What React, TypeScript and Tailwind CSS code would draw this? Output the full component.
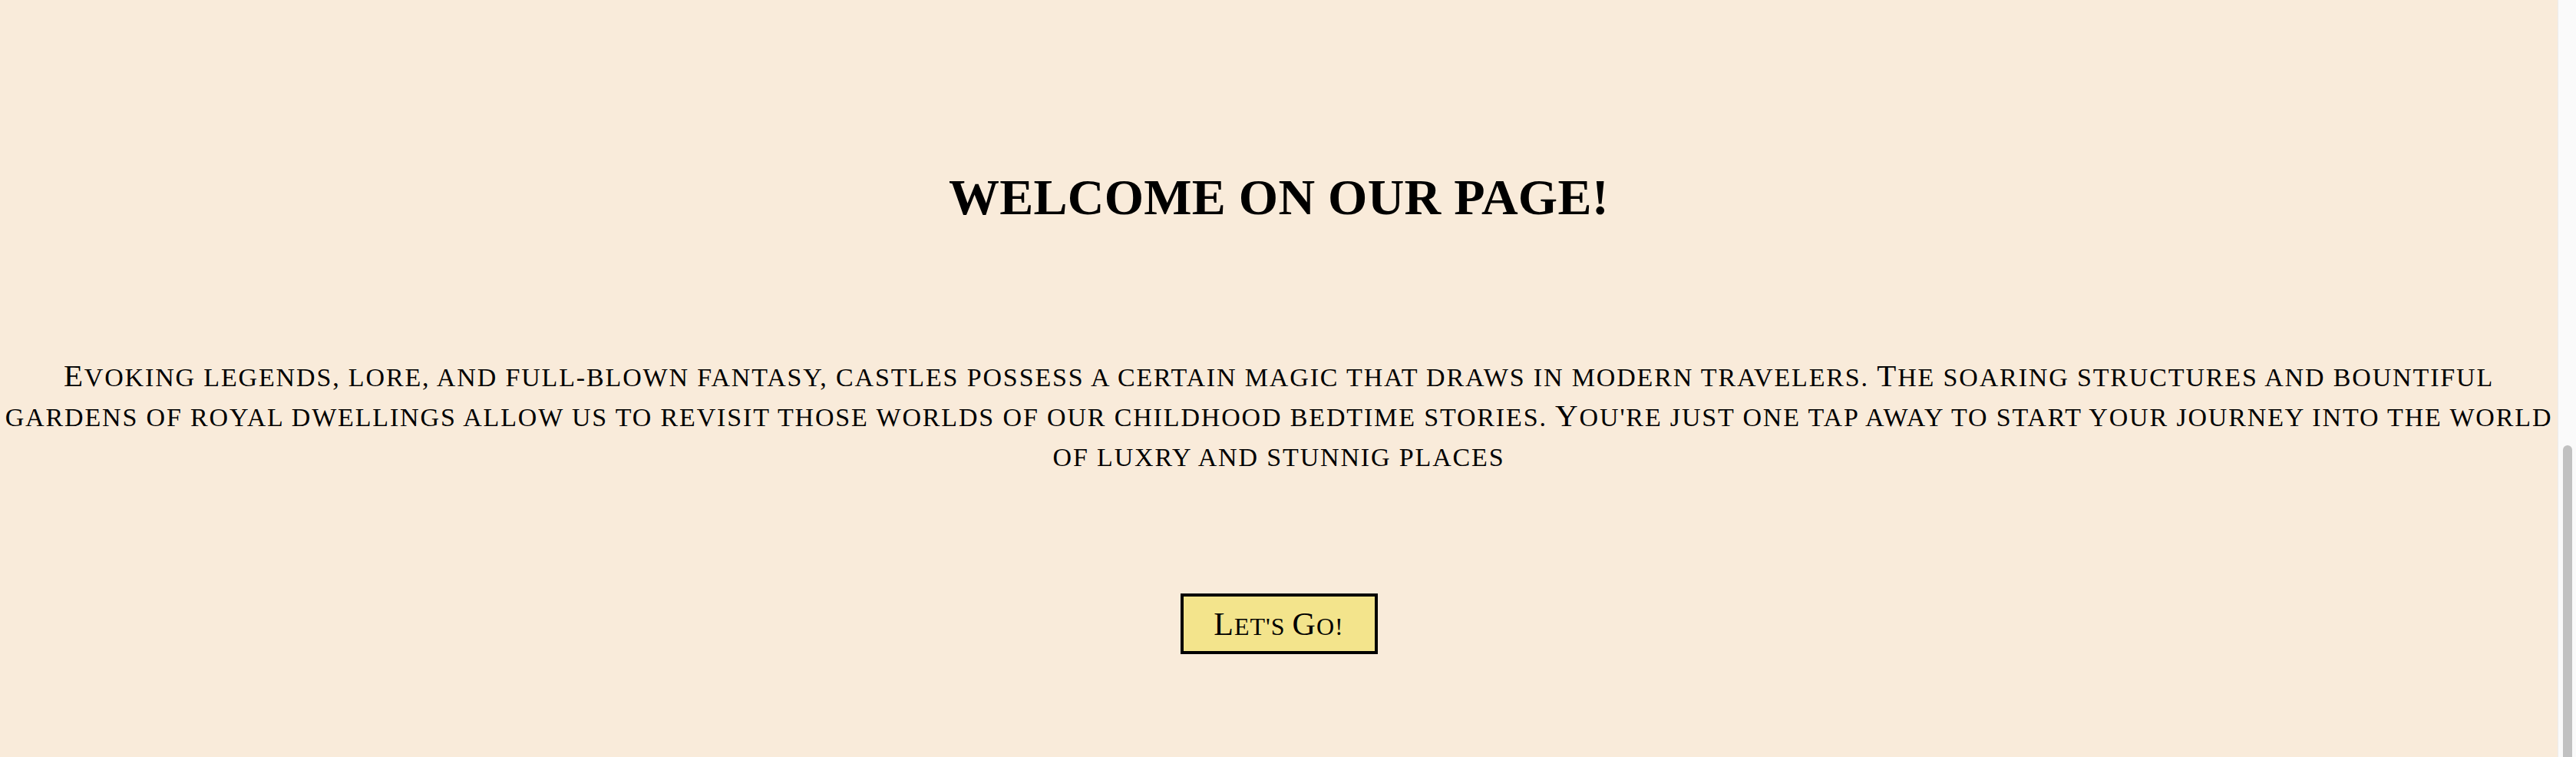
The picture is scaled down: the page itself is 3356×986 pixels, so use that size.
const Cap = ({ children }: { children: string }) => (
  <span className="text-[41px] leading-none">{children}</span>
);

export default function App() {
  return (
    <div className="flex h-screen w-full bg-[#f9ebda] font-['Liberation_Serif',serif] text-black">
      <main className="flex flex-1 flex-col items-center pt-[224px]">
        <h1 className="text-[66px] font-bold uppercase leading-none tracking-[0.25px]">
          Welcome on our page!
        </h1>

        <p className="mt-[176px] text-center text-[34px] uppercase leading-[52px] tracking-[1.85px]">
          <Cap>E</Cap>voking legends, lore, and full-blown fantasy, castles possess a certain magic that
          draws in modern travelers. <Cap>T</Cap>he soaring structures and bountiful
          <br />
          gardens of royal dwellings allow us to revisit those worlds of our childhood bedtime stories.{" "}
          <Cap>Y</Cap>ou're just one tap away to start your journey into the world
          <br />
          of luxry and stunnig places
        </p>

        <button className="mt-[151px] flex h-[79px] w-[257px] items-center justify-center border-4 border-black bg-[#f3e48c] text-[32px] uppercase leading-none tracking-[1px]">
          <span>
            <span className="text-[42px]">L</span>et's <span className="text-[42px]">G</span>o!
          </span>
        </button>
      </main>

      <div className="flex w-[24px] flex-col border-l border-[#ececec] bg-[#fafafa] pt-[580px]">
        <div className="mx-auto w-[12px] flex-1 rounded-t-full bg-[#c1c1c1]" />
      </div>
    </div>
  );
}
